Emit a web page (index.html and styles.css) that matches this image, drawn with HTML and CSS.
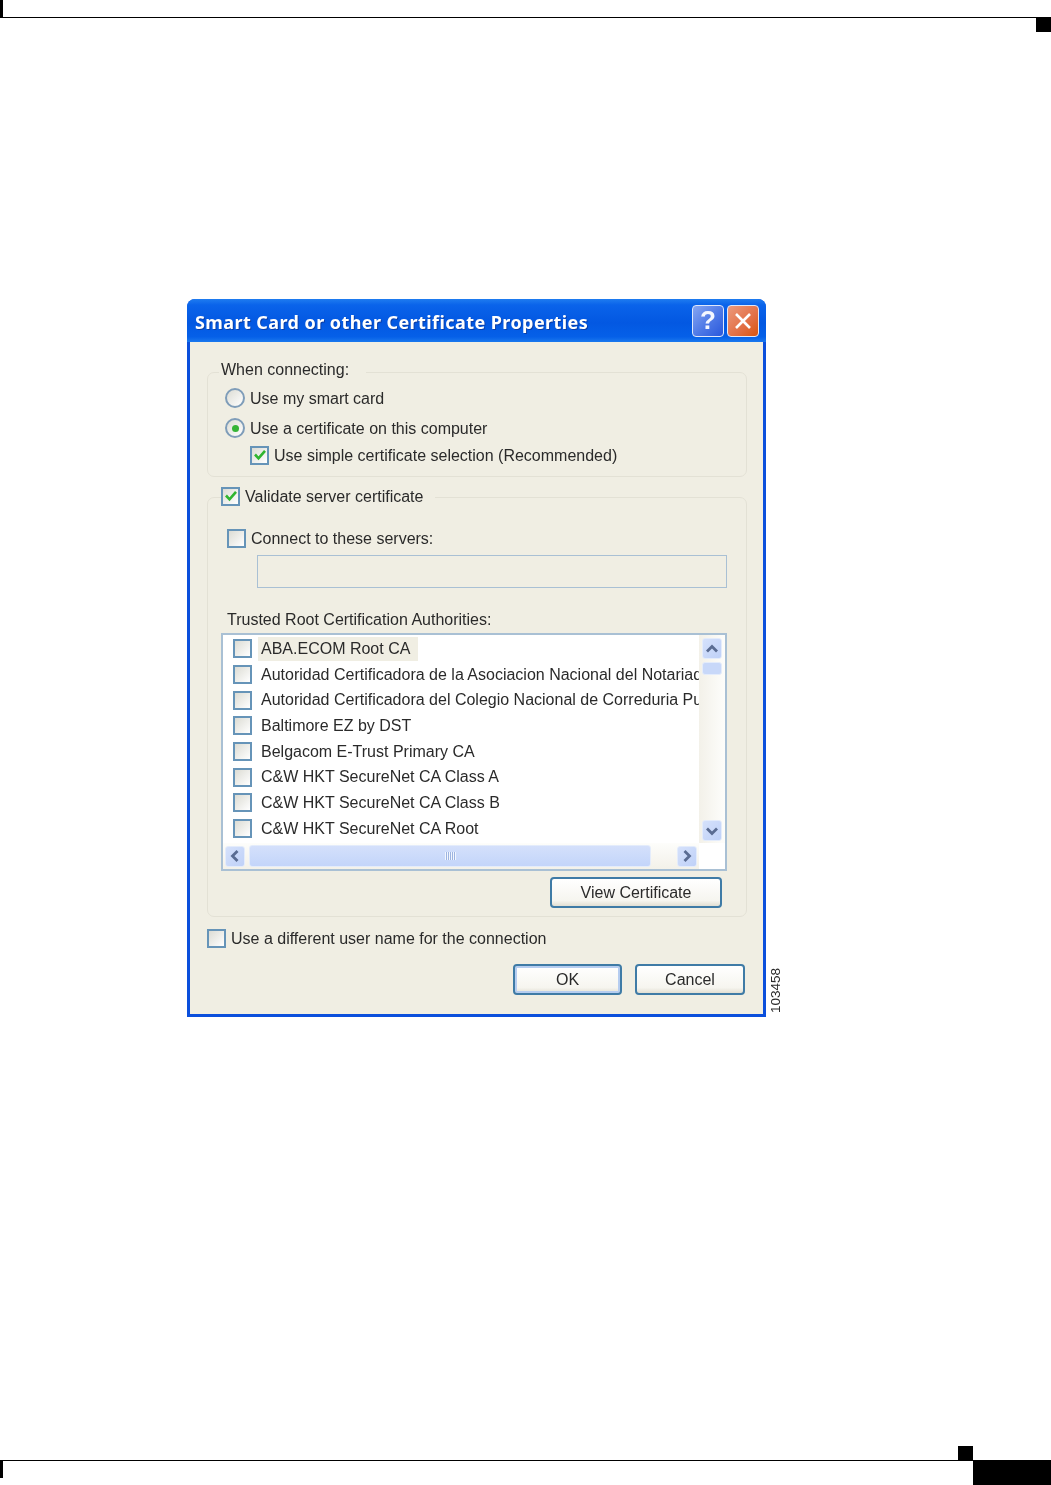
FILE: index.html
```html
<!DOCTYPE html>
<html lang="en">
<head>
    <meta charset="UTF-8" />
    <title>Smart Card or other Certificate Properties</title>
    <link rel="stylesheet" href="styles.css">
</head>
<body>
    <svg class="icon-defs" width="0" height="0">
        <symbol id="tick" viewBox="0 0 18 18">
            <path d="M4 8.5l3.5 3.8L14 4.8" fill="none" stroke="#2fb52f" stroke-width="2.6"/>
        </symbol>
        <symbol id="chev" viewBox="0 0 16 16">
            <path d="M3 10.5L8 5.5l5 5" fill="none" stroke="#5a6c92" stroke-width="2.8"/>
        </symbol>
    </svg>

    <div class="page">
        <div class="top-rule"><span class="tick-bar"></span></div>
        <div class="top-mark"></div>

        <div class="figure">
            <div class="window">
                <div class="titlebar">
                    <span class="title">Smart Card or other Certificate Properties</span>
                    <span class="title-btn help-btn">?</span>
                    <span class="title-btn close-btn">
                        <svg width="20" height="20" viewBox="0 0 20 20"><path d="M3 3l14 14M17 3L3 17" stroke="#fff" stroke-width="2.6"/></svg>
                    </span>
                </div>

                <div class="dialog-body">
                    <fieldset class="group group-connect">
                        <legend class="legend-text">When connecting:</legend>
                        <div class="opt opt-first"><span class="radio"></span>Use my smart card</div>
                        <div class="opt opt-second"><span class="radio on"></span>Use a certificate on this computer</div>
                        <div class="opt opt-sub">
                            <span class="check"><svg width="18" height="18"><use href="#tick"/></svg></span>Use simple certificate selection (Recommended)
                        </div>
                    </fieldset>

                    <fieldset class="group group-validate">
                        <legend class="legend-check">
                            <span class="check"><svg width="18" height="18"><use href="#tick"/></svg></span>Validate server certificate
                        </legend>
                        <div class="opt opt-servers"><span class="check"></span>Connect to these servers:</div>
                        <div class="server-input"></div>
                        <div class="list-label">Trusted Root Certification Authorities:</div>

                        <div class="listbox">
                            <div class="list-rows">
                                <div class="row"><span class="check"></span><span class="row-text selected">ABA.ECOM Root CA</span></div>
                                <div class="row"><span class="check"></span><span class="row-text">Autoridad Certificadora de la Asociacion Nacional del Notariado</span></div>
                                <div class="row"><span class="check"></span><span class="row-text">Autoridad Certificadora del Colegio Nacional de Correduria Publica</span></div>
                                <div class="row"><span class="check"></span><span class="row-text">Baltimore EZ by DST</span></div>
                                <div class="row"><span class="check"></span><span class="row-text">Belgacom E-Trust Primary CA</span></div>
                                <div class="row"><span class="check"></span><span class="row-text">C&amp;W HKT SecureNet CA Class A</span></div>
                                <div class="row"><span class="check"></span><span class="row-text">C&amp;W HKT SecureNet CA Class B</span></div>
                                <div class="row"><span class="check"></span><span class="row-text">C&amp;W HKT SecureNet CA Root</span></div>
                            </div>

                            <div class="vscroll">
                                <span class="sb-btn"><svg width="16" height="16"><use href="#chev"/></svg></span>
                                <span class="vthumb"></span>
                                <span class="sb-btn sb-end down"><svg width="16" height="16"><use href="#chev"/></svg></span>
                            </div>

                            <div class="hscroll">
                                <span class="sb-btn left"><svg width="16" height="16"><use href="#chev"/></svg></span>
                                <span class="hthumb"><span class="grip"></span></span>
                                <span class="sb-btn sb-end right"><svg width="16" height="16"><use href="#chev"/></svg></span>
                            </div>
                        </div>

                        <div class="view-row"><span class="btn btn-view">View Certificate</span></div>
                    </fieldset>

                    <div class="opt opt-user"><span class="check"></span>Use a different user name for the connection</div>

                    <div class="actions">
                        <span class="btn btn-ok">OK</span>
                        <span class="btn btn-cancel">Cancel</span>
                    </div>
                </div>
            </div>
            <div class="fig-no">103458</div>
        </div>

        <div class="foot-mark"></div>
        <div class="foot-row">
            <div class="foot-rule"><span class="tick-bar"></span></div>
            <div class="foot-tab"></div>
        </div>
    </div>
</body>
</html>
```

FILE: styles.css
```css
/* General Reset */
* {
    box-sizing: border-box;
    margin: 0;
    padding: 0;
}

body {
    background-color: #fff;
    color: #2a2a2a;
    font-family: 'Liberation Sans', Arial, sans-serif;
    font-size: 16px;
}

.icon-defs {
    position: absolute;
}

/* Page furniture */
.page {
    width: 1051px;
    height: 1485px;
    display: flex;
    flex-direction: column;
    overflow: hidden;
}

.top-rule {
    height: 18px;
    border-bottom: 1px solid #000;
}

.tick-bar {
    display: block;
    width: 3px;
    height: 17px;
    background-color: #000;
}

.top-mark {
    width: 15px;
    height: 14px;
    background-color: #000;
    align-self: flex-end;
}

.foot-mark {
    width: 15px;
    height: 14px;
    margin-top: auto;
    margin-left: 958px;
    background-color: #000;
}

.foot-row {
    display: flex;
    height: 25px;
}

.foot-rule {
    width: 973px;
    border-top: 1px solid #000;
}

.foot-tab {
    flex: 1;
    background-color: #000;
}

.figure {
    display: flex;
    margin: 267px 0 0 187px;
}

.fig-no {
    align-self: flex-end;
    margin: 0 0 4px 3px;
    writing-mode: vertical-rl;
    transform: rotate(180deg);
    font-size: 13.5px;
    line-height: 13px;
}

/* Window */
.window {
    width: 579px;
    height: 718px;
    display: flex;
    flex-direction: column;
    background-color: #0b4fdc;
    border-radius: 8px 8px 0 0;
    overflow: hidden;
    filter: blur(0.3px);
}

.titlebar {
    height: 43px;
    flex-shrink: 0;
    display: flex;
    align-items: center;
    padding: 0 7px 0 8px;
    background: linear-gradient(180deg, #1f7cf0 0%, #0a63ea 14%, #0358e2 55%, #0560e8 88%, #1a78ee 100%);
}

.title {
    flex: 1;
    padding-top: 3px;
    color: #fff;
    font-family: 'Noto Sans', sans-serif;
    font-weight: 700;
    font-size: 18px;
    letter-spacing: 0.42px;
    text-shadow: 1px 1px 0 #0b3fa8;
}

.title-btn {
    width: 32px;
    height: 32px;
    margin-left: 3px;
    display: flex;
    align-items: center;
    justify-content: center;
    border: 1px solid #dfe8fb;
    border-radius: 4px;
    color: #f4f7ff;
    font-weight: 700;
    font-size: 26px;
}

.help-btn {
    background: linear-gradient(135deg, #86a6f2 0%, #4d78e6 55%, #2a58dc 100%);
}

.close-btn {
    background: linear-gradient(135deg, #ec9a7c 0%, #e26f45 60%, #d9540f 100%);
}

.dialog-body {
    flex: 1;
    margin: 0 3px 3px 3px;
    padding: 18px 16px 0 17px;
    background-color: #f0eee3;
}

/* Group boxes */
.group {
    border: 1.5px solid #e3e1d5;
    border-radius: 7px;
}

.group-connect {
    height: 117px;
    padding-bottom: 8px;
}

.group-validate {
    height: 432px;
    margin-top: 8px;
    padding: 0 19px 0 13px;
}

.legend-text {
    margin-left: 11px;
    padding: 0 17px 5px 2px;
    line-height: 19px;
}

.legend-check {
    display: flex;
    align-items: center;
    height: 24px;
    padding: 0 12px 0 0;
}

.legend-check .check {
    margin-top: -2px;
}

.opt {
    display: flex;
    align-items: center;
    height: 28px;
    padding-top: 2px;
}

.opt .check,
.opt .radio {
    margin-top: -2px;
}

.opt-first,
.opt-second {
    margin-left: 17px;
}

.opt-second {
    margin-top: 2px;
}

.opt-sub {
    margin-left: 42px;
    margin-top: 0;
    height: 26px;
}

.opt-servers {
    margin: 15px 0 0 6px;
}

.opt-user {
    margin-top: 7px;
}

/* Controls */
.radio {
    width: 20px;
    height: 20px;
    margin-right: 5px;
    flex-shrink: 0;
    display: flex;
    align-items: center;
    justify-content: center;
    border: 2px solid #7f9db9;
    border-radius: 50%;
    background: linear-gradient(135deg, #dcdcd4, #fff);
}

.radio.on::after {
    content: '';
    width: 7px;
    height: 7px;
    border-radius: 50%;
    background-color: #36b436;
}

.check {
    width: 19px;
    height: 19px;
    margin-right: 5px;
    flex-shrink: 0;
    border: 2px solid #6694b8;
    background: linear-gradient(135deg, #dcdcd4, #fff);
}

.check svg {
    display: block;
    margin: -1.5px;
}

.server-input {
    height: 33px;
    margin: 3px 0 0 36px;
    border: 1.5px solid #a9c0d4;
}

.list-label {
    height: 28px;
    margin: 17px 0 0 6px;
    line-height: 30px;
}

/* List with scrollbars */
.listbox {
    height: 238px;
    display: grid;
    grid-template-columns: 1fr 26px;
    grid-template-rows: 1fr 26px;
    border: 2px solid #a9c0d4;
    background-color: #fff;
}

.list-rows {
    padding: 1px 0 0 10px;
    overflow: hidden;
}

.row {
    display: flex;
    align-items: center;
    height: 25.7px;
    white-space: nowrap;
}

.row .check {
    margin-right: 6px;
}

.row-text {
    padding: 0 8px 0 3px;
    line-height: 24px;
}

.row-text.selected {
    background-color: #f0eee3;
}

.vscroll {
    grid-column: 2;
    grid-row: 1;
    display: flex;
    flex-direction: column;
    padding: 3px 3px 2px 3px;
    background: linear-gradient(90deg, #f3f1e9, #fdfdfb);
}

.hscroll {
    grid-column: 1;
    grid-row: 2;
    display: flex;
    align-items: center;
    padding: 0 2px;
    background: linear-gradient(180deg, #fdfdfb, #f3f1e9);
}

.sb-btn {
    width: 20px;
    height: 21px;
    flex-shrink: 0;
    display: flex;
    align-items: center;
    justify-content: center;
    border: 1px solid #e4ecfb;
    border-radius: 3px;
    background: linear-gradient(135deg, #d5e1fb, #bfd1f8);
}

.sb-end {
    margin-top: auto;
    margin-left: auto;
}

.hscroll .sb-end {
    margin-top: 0;
}

.down svg {
    transform: rotate(180deg);
}

.left svg {
    transform: rotate(-90deg);
}

.right svg {
    transform: rotate(90deg);
}

.vthumb {
    height: 13px;
    margin-top: 3px;
    border: 1px solid #e4ecfb;
    border-radius: 3px;
    background-color: #c8d8f9;
}

.hthumb {
    width: 402px;
    height: 22px;
    margin-left: 4px;
    display: flex;
    align-items: center;
    justify-content: center;
    border: 1px solid #e4ecfb;
    border-radius: 3px;
    background: linear-gradient(180deg, #d4e0fb, #c3d5fa);
}

.grip {
    width: 11px;
    height: 8px;
    background: repeating-linear-gradient(90deg, #f2f6fe 0 1px, #9db4e0 1px 2px);
}

/* Buttons */
.btn {
    display: flex;
    align-items: center;
    justify-content: center;
    height: 31px;
    border: 2px solid #3f7ba6;
    border-radius: 4px;
    background: linear-gradient(180deg, #fff 0%, #f6f5ef 80%, #e2dfd3 100%);
}

.view-row {
    display: flex;
    justify-content: flex-end;
    padding: 6px 5px 0 0;
}

.btn-view {
    width: 172px;
    padding-top: 1px;
}

.actions {
    display: flex;
    justify-content: flex-end;
    gap: 13px;
    margin-top: 12px;
    padding-right: 2px;
}

.btn-ok {
    width: 109px;
    box-shadow: inset 0 0 0 2px #b6cdf0;
}

.btn-cancel {
    width: 110px;
}
```
